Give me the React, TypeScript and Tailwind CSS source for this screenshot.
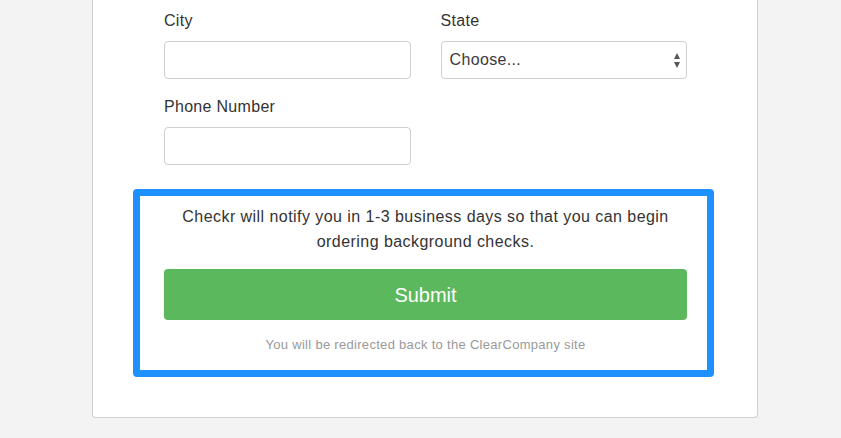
const FONT = "font-['Liberation_Sans',Arial,sans-serif]"

function Field({ label, children }: { label: string; children: React.ReactNode }) {
  return (
    <div className="flex flex-col">
      <label className="mb-[9px] text-[16px] leading-[22px] tracking-[0.3px] text-[#333]">{label}</label>
      {children}
    </div>
  )
}

function TextInput() {
  return (
    <input
      type="text"
      className="h-[38px] w-full rounded-[4px] border border-[#cfcfcf] bg-white px-[9px] text-[16px] text-[#333] outline-none"
    />
  )
}

function StateSelect() {
  return (
    <div className="flex h-[38px] w-full items-center justify-between rounded-[4px] border border-[#cfcfcf] bg-white pl-[8px] pr-[6px]">
      <span className="text-[16px] tracking-[0.35px] text-[#3a3a3a]">Choose...</span>
      <svg width="6" height="15" viewBox="0 0 6 15" className="fill-[#555]">
        <polygon points="3,0 6,6 0,6" />
        <polygon points="0,9 6,9 3,15" />
      </svg>
    </div>
  )
}

export default function App() {
  return (
    <div className={`min-h-screen bg-[#f3f3f3] ${FONT}`}>
      <div className="ml-[92px] w-[666px] rounded-b-[4px] border border-t-0 border-[#cfcfcf] bg-white pb-[40px] pl-[71px] pr-[70px] pt-[10px]">
        <div className="grid grid-cols-2 gap-x-[30px] gap-y-[17px]">
          <Field label="City">
            <TextInput />
          </Field>
          <Field label="State">
            <StateSelect />
          </Field>
          <Field label="Phone Number">
            <TextInput />
          </Field>
        </div>

        <div className="-ml-[31px] -mr-[27px] mt-[24px] rounded-[4px] border-[7px] border-[#1e90ff] pb-[15px] pl-[24px] pr-[20px] pt-[8px]">
          <p className="text-center text-[16px] leading-[25px] tracking-[0.45px] text-[#333]">
            Checkr will notify you in 1-3 business days so that you can begin ordering background checks.
          </p>
          <button className="mt-[15px] flex h-[51px] w-full items-center justify-center rounded-[4px] bg-[#5cb85c] text-[20px] text-white">
            Submit
          </button>
          <p className="mt-[15px] text-center text-[13px] leading-[20px] tracking-[0.3px] text-[#999]">
            You will be redirected back to the ClearCompany site
          </p>
        </div>
      </div>
    </div>
  )
}
